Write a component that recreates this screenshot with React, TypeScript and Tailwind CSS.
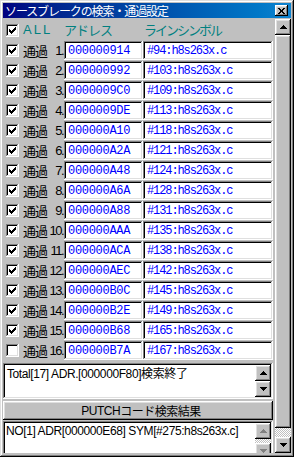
import React from 'react';

const RAISED =
  'shadow-[inset_-1px_-1px_#000000,inset_1px_1px_#ffffff,inset_-2px_-2px_#808080,inset_2px_2px_#dfdfdf]';
const SUNKEN =
  'shadow-[inset_-1px_-1px_#ffffff,inset_1px_1px_#808080,inset_-2px_-2px_#dfdfdf,inset_2px_2px_#000000]';
const CHECKER = 'bg-[repeating-conic-gradient(#c0c0c0_0_25%,#ffffff_0_50%)] bg-[length:2px_2px]';

const JP = "font-['Noto_Sans_CJK_JP',sans-serif]";
const MONO = "font-['Liberation_Mono','Noto_Sans_CJK_JP',monospace]";

const rows = [
  { addr: '000000914', sym: '#94:h8s263x.c', on: true },
  { addr: '000000992', sym: '#103:h8s263x.c', on: true },
  { addr: '0000009C0', sym: '#109:h8s263x.c', on: true },
  { addr: '0000009DE', sym: '#113:h8s263x.c', on: true },
  { addr: '000000A10', sym: '#118:h8s263x.c', on: true },
  { addr: '000000A2A', sym: '#121:h8s263x.c', on: true },
  { addr: '000000A48', sym: '#124:h8s263x.c', on: true },
  { addr: '000000A6A', sym: '#128:h8s263x.c', on: true },
  { addr: '000000A88', sym: '#131:h8s263x.c', on: true },
  { addr: '000000AAA', sym: '#135:h8s263x.c', on: true },
  { addr: '000000ACA', sym: '#138:h8s263x.c', on: true },
  { addr: '000000AEC', sym: '#142:h8s263x.c', on: true },
  { addr: '000000B0C', sym: '#145:h8s263x.c', on: true },
  { addr: '000000B2E', sym: '#149:h8s263x.c', on: true },
  { addr: '000000B68', sym: '#165:h8s263x.c', on: true },
  { addr: '000000B7A', sym: '#167:h8s263x.c', on: false },
];

function Checkbox({ checked }: { checked: boolean }) {
  return (
    <div className={`flex h-[13px] w-[13px] shrink-0 items-center justify-center bg-white ${SUNKEN}`}>
      {checked && (
        <svg width="7" height="7" viewBox="0 0 7 7" shapeRendering="crispEdges">
          <path
            d="M6 0h1v3h-1v1h-1v1h-1v1h-1v1h-1v-1h-1v-1h-1v-3h1v1h1v1h1v-1h1v-1h1z"
            fill="#000"
          />
        </svg>
      )}
    </div>
  );
}

function Arrow({ up, disabled }: { up?: boolean; disabled?: boolean }) {
  const color = disabled ? '#808080' : '#000000';
  return (
    <div className={`flex h-[16px] w-[16px] shrink-0 items-center justify-center bg-[#c0c0c0] ${RAISED}`}>
      <svg width="7" height="4" viewBox="0 0 7 4" shapeRendering="crispEdges">
        {up ? (
          <path d="M3 0h1v1h1v1h1v1h1v1h-7v-1h1v-1h1v-1h1z" fill={color} />
        ) : (
          <path d="M0 0h7v1h-1v1h-1v1h-1v1h-1v-1h-1v-1h-1v-1h-1z" fill={color} />
        )}
      </svg>
    </div>
  );
}

export default function App() {
  return (
    <div
      className={`flex h-[457px] w-[294px] flex-col overflow-hidden bg-[#c0c0c0] px-[3px] pt-[3px] pb-[4px] shadow-[inset_-1px_-1px_#000000,inset_1px_1px_#dfdfdf,inset_-2px_-2px_#808080,inset_2px_2px_#ffffff] ${JP}`}
    >
      {/* Title bar */}
      <div className="flex h-[15px] shrink-0 items-center bg-linear-to-r from-[#000080] to-[#1084d0] pl-[2px]">
        <span className="text-[12px] leading-none tracking-[-1.1px] text-white">
          ソースブレークの検索・通過設定
        </span>
        <div className={`ml-auto mr-[3px] flex h-[11px] w-[13px] items-center justify-center bg-[#c0c0c0] ${RAISED}`}>
          <svg width="7" height="6" viewBox="0 0 7 6" shapeRendering="crispEdges">
            <path
              d="M0 0h2v1h1v1h1v-1h1v-1h2v1h-1v1h-1v2h1v1h1v1h-2v-1h-1v-1h-1v1h-1v1h-2v-1h1v-1h1v-2h-1v-1h-1z"
              fill="#000"
            />
          </svg>
        </div>
      </div>

      <div className="mt-[1px] flex min-h-0 flex-1 gap-[2px] overflow-hidden">
        {/* Left column */}
        <div className="flex w-[270px] shrink-0 flex-col overflow-hidden">
          {/* Header */}
          <div className="flex h-[22px] shrink-0 items-center pl-[3px] text-[13px] text-[#008080]">
            <Checkbox checked />
            <span className="ml-[4px] w-[41px] font-['Liberation_Sans',sans-serif] tracking-[2px]">ALL</span>
            <span className="w-[80px] tracking-[-1px]">アドレス</span>
            <span className="tracking-[-2px]">ラインシンボル</span>
          </div>

          {/* Rows */}
          {rows.map((r, i) => (
            <div key={r.addr} className="flex h-[20px] shrink-0 items-start">
              <div className="flex h-[19px] w-[61px] shrink-0 items-center pl-[3px] pr-[1px]">
                <Checkbox checked={r.on} />
                <span className="ml-[4px] text-[13px] leading-none tracking-[-1px] text-black">通過</span>
                <span className="ml-auto font-['Liberation_Sans',sans-serif] text-[13px] leading-none tracking-[-1.5px] text-black">
                  {i + 1}.
                </span>
              </div>
              <div
                className={`flex h-[19px] w-[79px] shrink-0 items-center bg-white pl-[4px] text-[12px] tracking-[-0.3px] text-[#0000ff] ${SUNKEN} ${MONO}`}
              >
                {r.addr}
              </div>
              <div
                className={`flex h-[19px] flex-1 items-center bg-white pl-[4px] text-[12px] tracking-[-1.1px] text-[#0000ff] ${SUNKEN} ${MONO}`}
              >
                {r.sym}
              </div>
            </div>
          ))}

          {/* Result box */}
          <div className={`mt-[2px] flex h-[36px] shrink-0 bg-white p-[2px] ${SUNKEN}`}>
            <div className="flex-1 pl-[2px] pt-[1px] text-[12px] leading-[14px] tracking-[-0.4px] text-black">
              <span className="font-['Liberation_Sans',sans-serif]">Total[17] ADR.[000000F80]</span>検索終了
            </div>
            <div className="flex flex-col">
              <Arrow up />
              <Arrow />
            </div>
          </div>

          {/* Button */}
          <div
            className={`mt-[2px] flex h-[19px] shrink-0 items-center justify-center bg-[#c0c0c0] pl-[6px] text-[12px] tracking-[-0.5px] text-black ${RAISED}`}
          >
            <span className="font-['Liberation_Sans',sans-serif]">PUTCH</span>コード検索結果
          </div>

          {/* Second box */}
          <div className={`mt-[1px] flex h-[40px] shrink-0 bg-white p-[2px] ${SUNKEN}`}>
            <div className="flex-1 pl-[1px] pt-[1px] font-['Liberation_Sans',sans-serif] text-[12px] leading-[14px] tracking-[-0.4px] text-black">
              NO[1] ADR[000000E68] SYM[#275:h8s263x.c]
            </div>
            <div className="flex flex-col">
              <Arrow up disabled />
              <div className={`h-[4px] w-[16px] ${CHECKER}`} />
              <Arrow disabled />
            </div>
          </div>
        </div>

        {/* Outer scrollbar */}
        <div className="flex w-[16px] shrink-0 flex-col">
          <Arrow up />
          <div className={`h-[393px] w-[16px] shrink-0 bg-[#c0c0c0] ${RAISED}`} />
          <div className={`h-[9px] w-[16px] shrink-0 ${CHECKER}`} />
          <Arrow />
        </div>
      </div>
    </div>
  );
}
